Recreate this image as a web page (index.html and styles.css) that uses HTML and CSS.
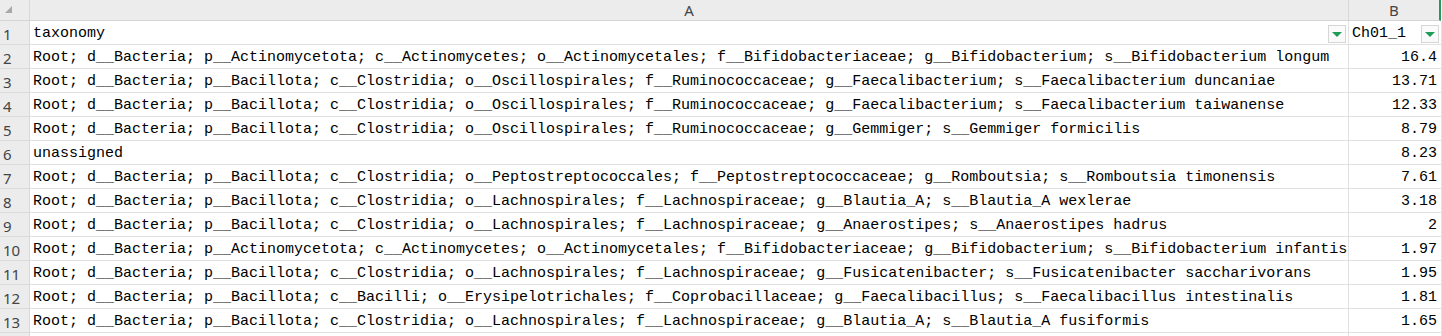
FILE: index.html
```html
<!DOCTYPE html>
<html>
<head>
<meta charset="utf-8">
<link rel="stylesheet" href="styles.css">
</head>
<body>
<div class="sheet">
  <div class="corner"><span class="corner-tri"></span></div>
  <div class="colhead">A</div>
  <div class="colhead colhead-b">B</div>

  <div class="rownum">1</div>
  <div class="cell txt">taxonomy<span class="filter"><span class="tri"></span></span></div>
  <div class="cell txt">Ch01_1<span class="filter"><span class="tri"></span></span></div>

  <div class="rownum">2</div>
  <div class="cell txt">Root; d__Bacteria; p__Actinomycetota; c__Actinomycetes; o__Actinomycetales; f__Bifidobacteriaceae; g__Bifidobacterium; s__Bifidobacterium longum</div>
  <div class="cell num">16.4</div>

  <div class="rownum">3</div>
  <div class="cell txt">Root; d__Bacteria; p__Bacillota; c__Clostridia; o__Oscillospirales; f__Ruminococcaceae; g__Faecalibacterium; s__Faecalibacterium duncaniae</div>
  <div class="cell num">13.71</div>

  <div class="rownum">4</div>
  <div class="cell txt">Root; d__Bacteria; p__Bacillota; c__Clostridia; o__Oscillospirales; f__Ruminococcaceae; g__Faecalibacterium; s__Faecalibacterium taiwanense</div>
  <div class="cell num">12.33</div>

  <div class="rownum">5</div>
  <div class="cell txt">Root; d__Bacteria; p__Bacillota; c__Clostridia; o__Oscillospirales; f__Ruminococcaceae; g__Gemmiger; s__Gemmiger formicilis</div>
  <div class="cell num">8.79</div>

  <div class="rownum">6</div>
  <div class="cell txt">unassigned</div>
  <div class="cell num">8.23</div>

  <div class="rownum">7</div>
  <div class="cell txt">Root; d__Bacteria; p__Bacillota; c__Clostridia; o__Peptostreptococcales; f__Peptostreptococcaceae; g__Romboutsia; s__Romboutsia timonensis</div>
  <div class="cell num">7.61</div>

  <div class="rownum">8</div>
  <div class="cell txt">Root; d__Bacteria; p__Bacillota; c__Clostridia; o__Lachnospirales; f__Lachnospiraceae; g__Blautia_A; s__Blautia_A wexlerae</div>
  <div class="cell num">3.18</div>

  <div class="rownum">9</div>
  <div class="cell txt">Root; d__Bacteria; p__Bacillota; c__Clostridia; o__Lachnospirales; f__Lachnospiraceae; g__Anaerostipes; s__Anaerostipes hadrus</div>
  <div class="cell num">2</div>

  <div class="rownum">10</div>
  <div class="cell txt">Root; d__Bacteria; p__Actinomycetota; c__Actinomycetes; o__Actinomycetales; f__Bifidobacteriaceae; g__Bifidobacterium; s__Bifidobacterium infantis</div>
  <div class="cell num">1.97</div>

  <div class="rownum">11</div>
  <div class="cell txt">Root; d__Bacteria; p__Bacillota; c__Clostridia; o__Lachnospirales; f__Lachnospiraceae; g__Fusicatenibacter; s__Fusicatenibacter saccharivorans</div>
  <div class="cell num">1.95</div>

  <div class="rownum">12</div>
  <div class="cell txt">Root; d__Bacteria; p__Bacillota; c__Bacilli; o__Erysipelotrichales; f__Coprobacillaceae; g__Faecalibacillus; s__Faecalibacillus intestinalis</div>
  <div class="cell num">1.81</div>

  <div class="rownum">13</div>
  <div class="cell txt">Root; d__Bacteria; p__Bacillota; c__Clostridia; o__Lachnospirales; f__Lachnospiraceae; g__Blautia_A; s__Blautia_A fusiformis</div>
  <div class="cell num">1.65</div>

  <div class="rownum"></div>
  <div class="cell txt"></div>
  <div class="cell num"></div>
</div>
</body>
</html>
```
FILE: styles.css
```css
html, body {
  margin: 0;
  padding: 0;
  background: #ffffff;
  overflow: hidden;
}

.sheet {
  display: grid;
  grid-template-columns: 30px 1319px 93px;
  grid-template-rows: 21px repeat(14, 24px);
  width: 1442px;
}

.corner {
  background: #ececec;
  border-right: 1px solid #d8d8d8;
  border-bottom: 1px solid #d4d4d4;
  position: relative;
}

.corner-tri {
  position: absolute;
  left: 5px;
  top: 6px;
  width: 0;
  height: 0;
  border-left: 7px solid transparent;
  border-bottom: 7px solid #a8a8a8;
}

.colhead {
  background: #ececec;
  border-right: 1px solid #d8d8d8;
  border-bottom: 1px solid #d4d4d4;
  font-family: "Noto Sans", "Liberation Sans", sans-serif;
  font-size: 15px;
  color: #444;
  display: flex;
  align-items: center;
  justify-content: center;
  line-height: 20px;
}

.colhead-b {
  border-right: 2px solid #1f9b5a;
  margin-right: 1px;
}

.rownum {
  background: #ececec;
  border-right: 1px solid #d8d8d8;
  border-bottom: 1px solid #dcdcdc;
  font-family: "Noto Sans", "Liberation Sans", sans-serif;
  font-size: 15px;
  color: #444;
  padding-left: 3px;
  padding-top: 3px;
  line-height: 20px;
  overflow: hidden;
}

.cell {
  border-right: 1px solid #e1e1e1;
  border-bottom: 1px solid #e1e1e1;
  font-family: "Liberation Mono", "DejaVu Sans Mono", monospace;
  font-size: 15px;
  color: #000;
  padding-top: 3px;
  line-height: 20px;
  white-space: nowrap;
  overflow: hidden;
  position: relative;
}

.txt {
  padding-left: 3px;
}

.num {
  text-align: right;
  padding-right: 4px;
}

.filter {
  position: absolute;
  right: 2px;
  top: 4px;
  width: 16px;
  height: 16px;
  border: 1px solid #d6d6d6;
  background: #fafafa;
  display: flex;
  align-items: center;
  justify-content: center;
}

.tri {
  width: 0;
  height: 0;
  border-left: 5px solid transparent;
  border-right: 5px solid transparent;
  border-top: 5px solid #1f9b5a;
}
```
